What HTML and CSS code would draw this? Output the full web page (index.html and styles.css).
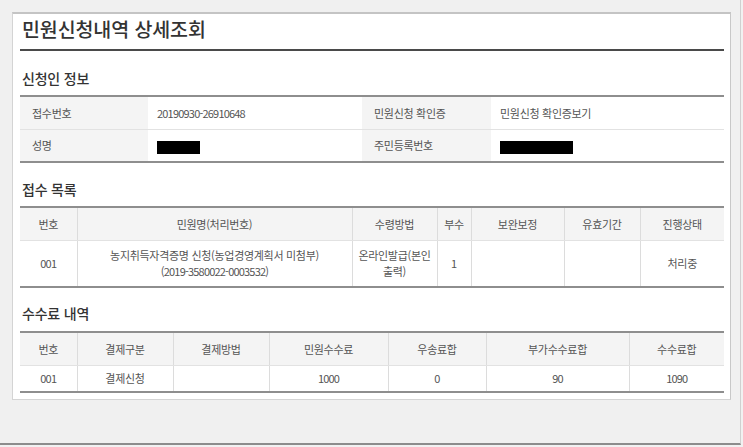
FILE: index.html
```html
<!DOCTYPE html>
<html lang="ko">
<head>
<meta charset="utf-8">
<title>민원신청내역 상세조회</title>
<link rel="stylesheet" href="styles.css">
</head>
<body>
<div class="frame">
  <div class="panel">
    <h1 class="title">민원신청내역 상세조회</h1>

    <h2 class="sec sec-info">신청인 정보</h2>
    <table class="tbl info">
      <colgroup><col style="width:128px"><col style="width:214px"><col style="width:129px"><col></colgroup>
      <tr>
        <th>접수번호</th>
        <td><span class="num">20190930-26910648</span></td>
        <th>민원신청 확인증</th>
        <td>민원신청 확인증보기</td>
      </tr>
      <tr>
        <th>성명</th>
        <td><span class="mask mask-name"></span></td>
        <th>주민등록번호</th>
        <td><span class="mask mask-id"></span></td>
      </tr>
    </table>

    <h2 class="sec sec-recv">접수 목록</h2>
    <table class="tbl grid recv">
      <colgroup><col style="width:57px"><col style="width:275px"><col style="width:85px"><col style="width:34px"><col style="width:93px"><col style="width:76px"><col></colgroup>
      <tr class="head">
        <th>번호</th><th>민원명(처리번호)</th><th>수령방법</th><th>부수</th><th>보완보정</th><th>유효기간</th><th>진행상태</th>
      </tr>
      <tr class="tall">
        <td><span class="num">001</span></td>
        <td>농지취득자격증명 신청(농업경영계획서 미첨부)<br><span class="num">(2019-3580022-0003532)</span></td>
        <td>온라인발급(본인 출력)</td>
        <td>1</td>
        <td></td>
        <td></td>
        <td>처리중</td>
      </tr>
    </table>

    <h2 class="sec sec-fee">수수료 내역</h2>
    <table class="tbl grid fee">
      <colgroup><col style="width:57px"><col style="width:96px"><col style="width:96px"><col style="width:119px"><col style="width:98px"><col style="width:143px"><col></colgroup>
      <tr class="head">
        <th>번호</th><th>결제구분</th><th>결제방법</th><th>민원수수료</th><th>우송료합</th><th>부가수수료합</th><th>수수료합</th>
      </tr>
      <tr class="short">
        <td><span class="num">001</span></td>
        <td>결제신청</td>
        <td></td>
        <td><span class="num">1000</span></td>
        <td><span class="num">0</span></td>
        <td><span class="num">90</span></td>
        <td><span class="num">1090</span></td>
      </tr>
    </table>
  </div>
</div>
</body>
</html>
```

FILE: styles.css
```css
* { box-sizing: border-box; }

html, body {
  margin: 0;
  padding: 0;
  background: #f1f1f1;
}

body {
  font-family: "Noto Sans CJK KR", "Noto Sans", sans-serif;
  color: #555;
  font-size: 11px;
  letter-spacing: -0.3px;
}

.frame {
  width: 741px;
  height: 445px;
  padding: 12px 0 0 12px;
  background: #f0f0f0;
  border-right: 1px solid #d0d0d0;
  border-bottom: 2px solid #8c8c8c;
}

.panel {
  width: 719px;
  height: 388px;
  background: #fff;
  border: 1px solid #d4d4d4;
  border-top: 2px solid #c4c4c4;
  border-right: 1px solid #c8c8c8;
  padding: 0 6px 0 7px;
}

.title {
  margin: 0;
  height: 37px;
  padding-top: 0;
  line-height: 29px;
  font-size: 19.5px;
  font-weight: 500;
  letter-spacing: -0.1px;
  color: #333;
  padding-left: 2px;
  border-bottom: 2px solid #4a4a4a;
}

.sec {
  margin: 0;
  font-size: 14px;
  font-weight: 500;
  line-height: 18px;
  letter-spacing: -0.2px;
  color: #333;
  padding-left: 2px;
}
.sec-info { margin-top: 18px; margin-bottom: 8px; }
.sec-recv { margin-top: 17px; margin-bottom: 8px; }
.sec-fee  { margin-top: 16px; margin-bottom: 9px; }

.tbl {
  width: 704px;
  table-layout: fixed;
  border-collapse: collapse;
  border-top: 2px solid #8e8e8e;
  border-bottom: 2px solid #8e8e8e;
}

.tbl th, .tbl td {
  font-weight: 400;
  padding: 0;
  color: #555;
}

.info th, .info td {
  height: 33px;
  text-align: left;
  border-bottom: 1px solid #e2e2e2;
}
.info th {
  background: #f4f4f4;
  padding-left: 12px;
}
.info td {
  padding-left: 9px;
}

.grid th, .grid td {
  text-align: center;
  border-left: 1px solid #dcdcdc;
  border-bottom: 1px solid #e2e2e2;
  padding: 0 1px;
}
.grid th:first-child, .grid td:first-child { border-left: none; }
.grid .head th {
  background: #f4f4f4;
  height: 33px;
}
.grid td { height: 28px; line-height: 16px; }
.grid .tall td { height: 47px; }
.grid .short td { height: 27px; }

.num { letter-spacing: -0.8px; }

.mask {
  display: inline-block;
  background: #000;
  vertical-align: middle;
}
.mask-name { width: 43px; height: 13px; }
.mask-id { width: 73px; height: 13px; }
```
